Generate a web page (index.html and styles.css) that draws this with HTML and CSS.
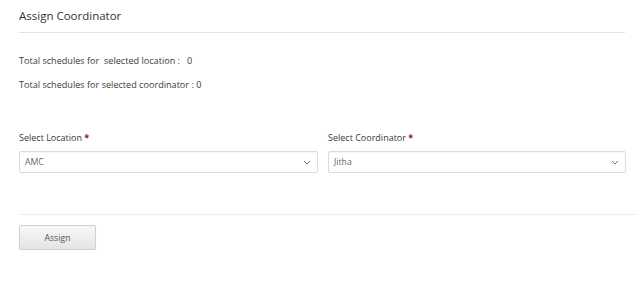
FILE: index.html
```html
<!DOCTYPE html>
<html lang="en">
<head>
  <meta charset="UTF-8" />
  <title>Assign Coordinator</title>
  <link rel="stylesheet" href="styles.css">
</head>
<body>

  <!-- Encabezado -->
  <div class="panel">
    <h1 class="panel-title">Assign Coordinator</h1>

    <div class="totals">
      <p>Total schedules for &nbsp;selected location : &nbsp;&nbsp;<span>0</span></p>
      <p>Total schedules for selected coordinator : <span>0</span></p>
    </div>

    <div class="fields">
      <div class="field">
        <label>Select Location <span class="req">*</span></label>
        <div class="select">
          <span>AMC</span>
          <svg width="8" height="5" viewBox="0 0 8 5"><path d="M1 1 L4 4 L7 1" fill="none" stroke="#777" stroke-width="1"/></svg>
        </div>
      </div>
      <div class="field">
        <label>Select Coordinator <span class="req">*</span></label>
        <div class="select">
          <span>Jitha</span>
          <svg width="8" height="5" viewBox="0 0 8 5"><path d="M1 1 L4 4 L7 1" fill="none" stroke="#777" stroke-width="1"/></svg>
        </div>
      </div>
    </div>

    <div class="actions">
      <button class="btn">Assign</button>
    </div>
  </div>

</body>
</html>
```

FILE: styles.css
```css
body {
  margin: 0;
  padding: 0;
  background: #ffffff;
  font-family: 'Open Sans', 'Liberation Sans', sans-serif;
  color: #444;
}

.panel {
  padding: 0 0 0 19px;
}

.panel-title {
  font-size: 11.5px;
  font-weight: 400;
  color: #333;
  margin: 0;
  padding: 9px 0 9px 0;
  width: 606px;
  border-bottom: 1px solid #e2e2e2;
  line-height: 14px;
}

.totals {
  padding-top: 22px;
}

.totals p {
  font-size: 9.1px;
  margin: 0 0 12px 0;
  line-height: 12px;
  color: #3a3a3a;
}

.fields {
  display: grid;
  grid-template-columns: 299px 298px;
  gap: 10px;
  margin-top: 41px;
}

.field label {
  display: block;
  font-size: 9px;
  line-height: 12px;
  color: #3a3a3a;
  margin-bottom: 7px;
}

.req {
  color: #8b1a1a;
  font-weight: 700;
}

.select {
  height: 20px;
  border: 1px solid #dcdcdc;
  border-radius: 2px;
  display: flex;
  align-items: center;
  justify-content: space-between;
  padding: 0 6px 0 5px;
  font-size: 8.7px;
  color: #666;
  box-shadow: inset 0 1px 1px rgba(0, 0, 0, 0.04);
}

.actions {
  margin-top: 41px;
  border-top: 1px solid #ececec;
  padding-top: 10px;
  width: 618px;
}

.btn {
  display: block;
  width: 77px;
  height: 25px;
  font-family: 'Open Sans', 'Liberation Sans', sans-serif;
  font-size: 8.7px;
  color: #555;
  background: linear-gradient(#f8f8f8, #e4e4e4);
  border: 1px solid #cfcfcf;
  border-radius: 2px;
  box-shadow: 0 1px 1px rgba(0, 0, 0, 0.08);
}
```
